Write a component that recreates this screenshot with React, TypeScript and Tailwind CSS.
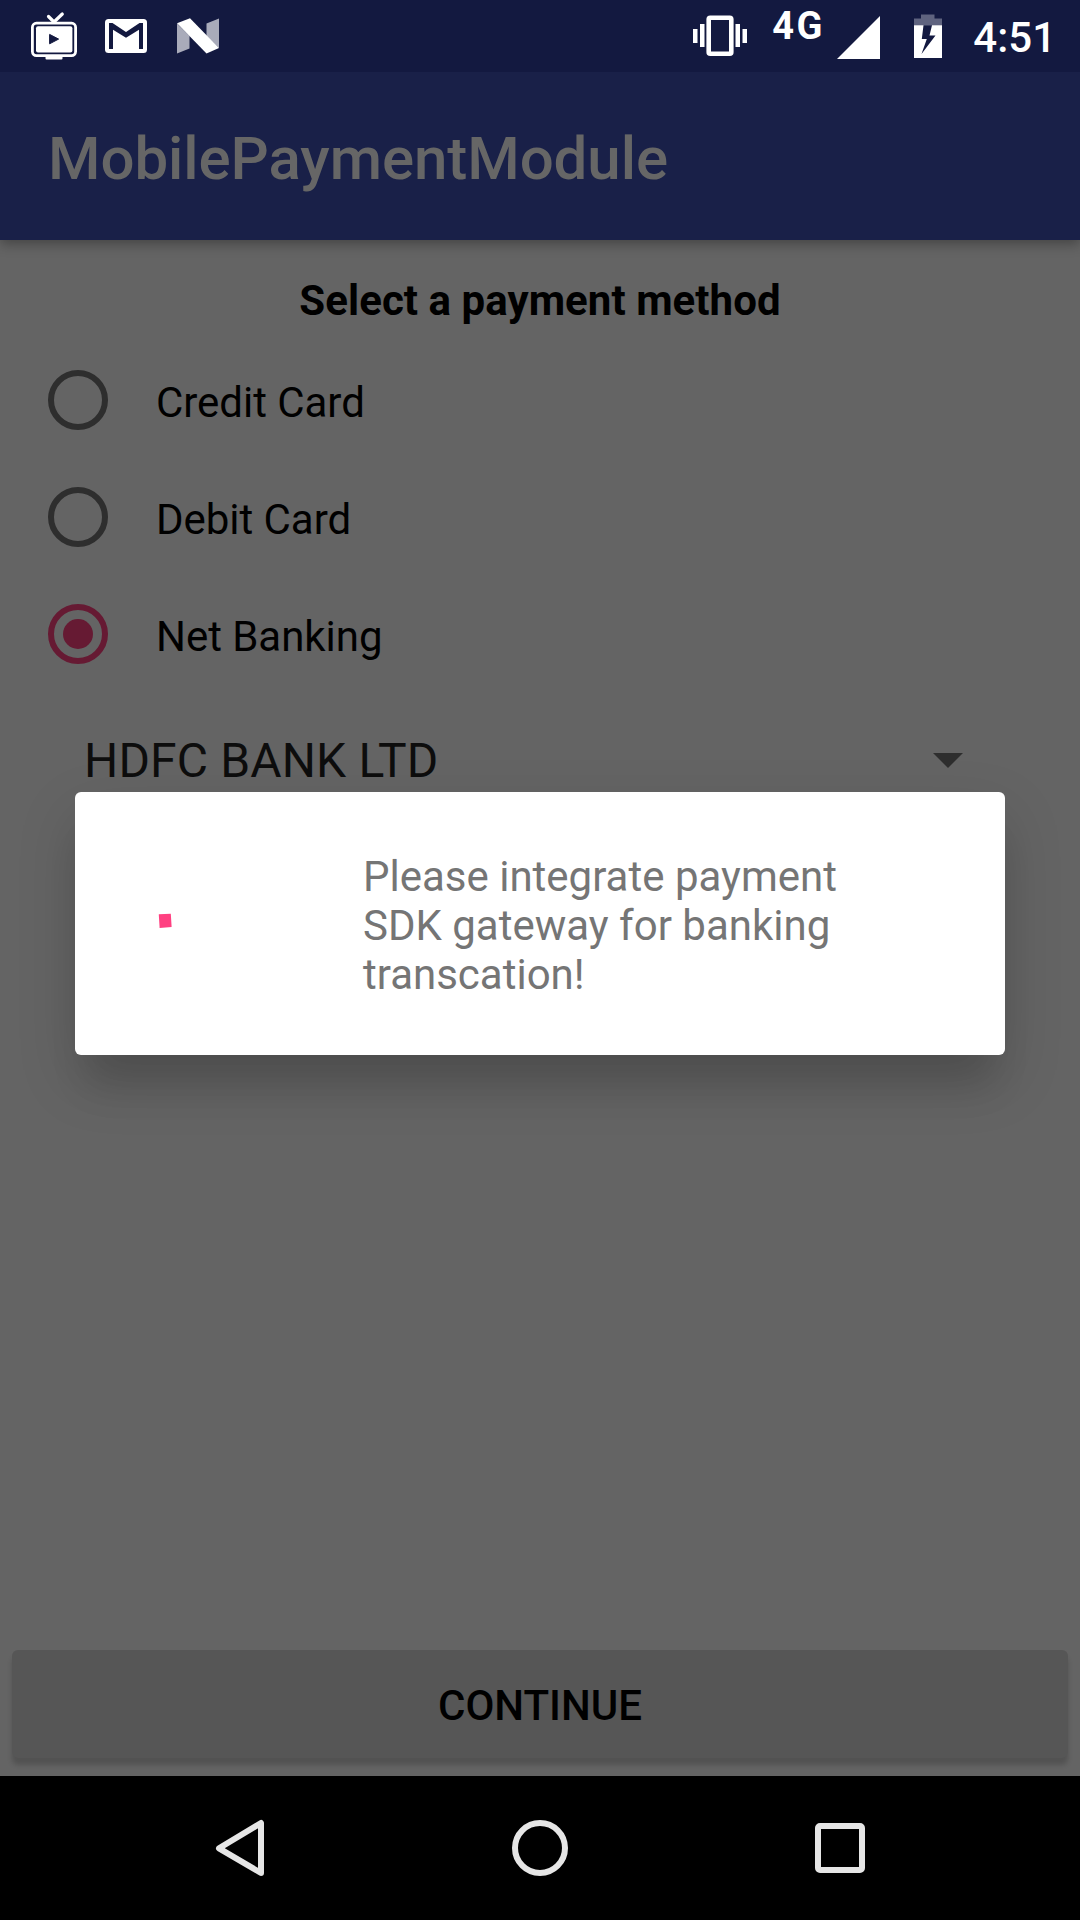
import React from "react";

const methods = [
  { label: "Credit Card", selected: false },
  { label: "Debit Card", selected: false },
  { label: "Net Banking", selected: true },
];

function StatusBar() {
  return (
    <div className="z-20 flex h-[72px] shrink-0 justify-between bg-[#131940] text-white">
      <div className="flex">
        {/* TV */}
        <svg className="ml-[30px] h-[72px] w-12" viewBox="30 0 48 72">
          <path d="M48.5 16.5L54 22L62.3 14" fill="none" stroke="#fff" strokeWidth="3.2" strokeLinecap="round" strokeLinejoin="round" />
          <rect x="32.4" y="23.2" width="43.2" height="32.4" rx="4" fill="none" stroke="#fff" strokeWidth="2.8" />
          <rect x="36" y="26.2" width="36.4" height="26.2" rx="2" fill="#fff" />
          <path d="M49.6 34.4v9.4l9-4.7z" fill="#131940" stroke="#131940" strokeWidth="1" strokeLinejoin="round" />
          <path d="M45.5 56h17v2.5a1 1 0 0 1-1 1h-15a1 1 0 0 1-1-1z" fill="#fff" />
        </svg>
        {/* Mail */}
        <svg className="ml-[27px] h-[72px] w-[42px]" viewBox="105 0 42 72">
          <rect x="105" y="19" width="42" height="34" rx="3.5" fill="#fff" />
          <path d="M109 49V23H112.5L126 32L139.5 23H143V49H139V29.8L126 37.8L113 29.8V49z" fill="#131940" />
        </svg>
        {/* Nougat */}
        <svg className="ml-[30px] h-[72px] w-[42px]" viewBox="177 0 42 72">
          <path d="M177 23.5L189.5 36V48.5L177 53.5zM219 18.5V48L206.5 36V23.5z" fill="#a9abba" />
          <path d="M177 23.2L190 18.3L219 48L206.5 53.4z" fill="#fff" />
        </svg>
      </div>
      <div className="flex">
        {/* Vibrate */}
        <svg className="h-[72px] w-[54px]" viewBox="693 0 54 72">
          <rect x="708.7" y="17.7" width="22.6" height="36" rx="1.5" fill="none" stroke="#fff" strokeWidth="4.6" />
          <path d="M693 29h4.5v14H693zM700 24h4.5v23H700zM735.5 24h4.5v23h-4.5zM742.5 29h4.5v14h-4.5z" fill="#fff" />
        </svg>
        <span className="ml-[25px] h-[53px] w-[54px] text-[38px] leading-[53px] font-bold tracking-[2.5px]">4G</span>
        <svg className="ml-[10px] h-[72px] w-[44px]" viewBox="836 0 44 72">
          <path d="M837 59L880 16V59z" fill="#fff" />
        </svg>
        <svg className="ml-[34px] h-[72px] w-7" viewBox="914 0 28 72">
          <path d="M914 25.5V18.5h7V14.5h13.5v4H942v7z" fill="#5f637f" />
          <path fillRule="evenodd" d="M914 25.3H942V58H914zM923.5 25.3L921.8 39H926.8L921.5 54L935.5 35.5H929.5L932 25.3z" fill="#fff" />
        </svg>
        <span className="mr-[24px] ml-[31px] h-[75px] text-[42px] leading-[75px] font-medium">4:51</span>
      </div>
    </div>
  );
}

function Radio({ label, selected }: { label: string; selected: boolean }) {
  return (
    <div className="flex h-[117px] items-center">
      {selected ? (
        <span className="flex size-[60px] items-center justify-center rounded-full border-[6px] border-[#661a33]">
          <span className="size-[30px] rounded-full bg-[#661a33]" />
        </span>
      ) : (
        <span className="size-[60px] rounded-full border-[6px] border-[#2e2e2e]" />
      )}
      <span className="ml-12 pt-[5px] text-[42px] leading-[49px] tracking-[-0.04px] text-black">{label}</span>
    </div>
  );
}

export default function App() {
  return (
    <div className="relative flex h-[1920px] w-[1080px] flex-col overflow-hidden bg-[#646464] font-[Roboto,sans-serif]">
      <StatusBar />
      <header className="z-10 flex h-[168px] shrink-0 items-center bg-[#192048] px-12 pt-[6px] shadow-[0_4px_12px_rgba(0,0,0,0.32)]">
        <h1 className="text-[60px] leading-[70px] font-medium tracking-[-0.06px] text-[#666666]">MobilePaymentModule</h1>
      </header>
      <main className="flex flex-1 flex-col">
        <h2 className="mt-[36px] text-center text-[42px] leading-[49px] font-bold tracking-[0.05px] text-black">Select a payment method</h2>
        <div className="mt-[16px] flex flex-col pl-12">
          {methods.map((m) => (
            <Radio key={m.label} label={m.label} selected={m.selected} />
          ))}
        </div>
        <div className="mt-[41px] flex h-[56px] items-center justify-between pr-[117px] pl-[84px]">
          <span className="text-[48px] leading-[56px] tracking-[0.15px] text-[#0d0d0d]">HDFC BANK LTD</span>
          <svg className="mb-[2px] h-[15px] w-[30px]" viewBox="0 0 30 15">
            <path d="M0 0h30L15 15z" fill="#2e2e2e" />
          </svg>
        </div>
        <button className="mx-3 mt-auto mb-[18px] h-[108px] rounded-[6px] bg-[#565656] pt-[3px] text-[42px] leading-[49px] font-medium text-black shadow-[0_7px_5px_rgba(0,0,0,0.18)]">
          CONTINUE
        </button>
      </main>
      <nav className="flex h-36 shrink-0 items-center justify-center bg-black">
        <svg className="h-[60px] w-[50px]" viewBox="215 1818 50 60">
          <path d="M261 1823V1873L219 1848.3z" fill="none" stroke="#e6e6e6" strokeWidth="6" strokeLinejoin="round" />
        </svg>
        <span className="ml-[247px] size-[56px] rounded-full border-[6px] border-[#e6e6e6]" />
        <span className="mr-[1px] ml-[247px] size-[50px] rounded-[5px] border-[6px] border-[#e6e6e6]" />
      </nav>
      <div role="dialog" className="absolute top-[792px] left-[75px] z-20 flex h-[263px] w-[930px] items-center rounded-[6px] bg-white shadow-[0_24px_60px_rgba(0,0,0,0.15),0_42px_36px_-12px_rgba(0,0,0,0.11)]">
        <svg className="mb-[8px] ml-[82px] h-4 w-4" viewBox="157 912 16 16">
          <path d="M158.8 914.2L170.8 913.7L171.6 927L159.6 928z" fill="#ff4081" />
        </svg>
        <p className="ml-[190px] w-[500px] pt-[3px] text-[42px] leading-[49px] text-[#757575]">
          Please integrate payment SDK gateway for banking transcation!
        </p>
      </div>
    </div>
  );
}
